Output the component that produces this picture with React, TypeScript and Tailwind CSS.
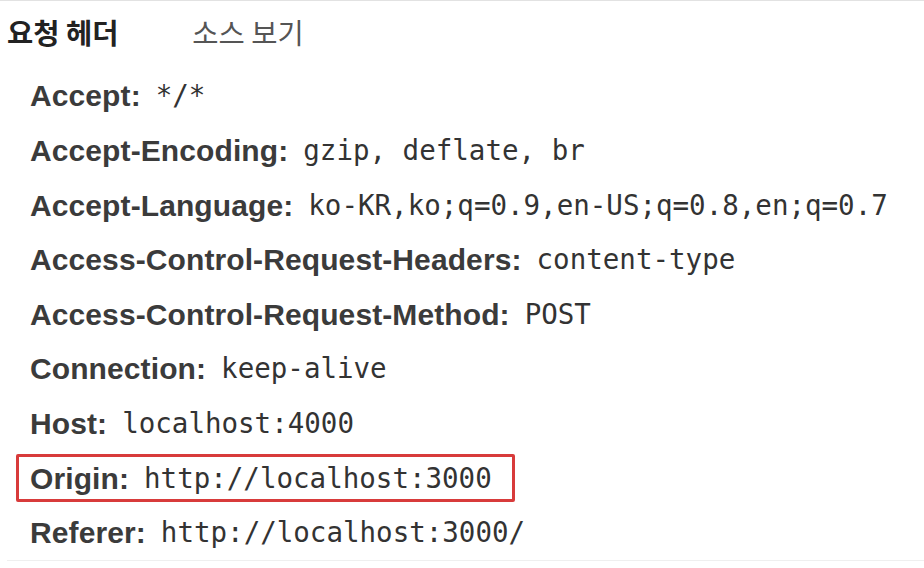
const headers: { name: string; value: string; highlight?: boolean }[] = [
  { name: "Accept", value: "*/*" },
  { name: "Accept-Encoding", value: "gzip, deflate, br" },
  { name: "Accept-Language", value: "ko-KR,ko;q=0.9,en-US;q=0.8,en;q=0.7" },
  { name: "Access-Control-Request-Headers", value: "content-type" },
  { name: "Access-Control-Request-Method", value: "POST" },
  { name: "Connection", value: "keep-alive" },
  { name: "Host", value: "localhost:4000" },
  { name: "Origin", value: "http://localhost:3000", highlight: true },
  { name: "Referer", value: "http://localhost:3000/" },
]

const sans = "font-['Liberation_Sans','Noto_Sans_CJK_KR',sans-serif]"
const mono = "font-['DejaVu_Sans_Mono','Liberation_Mono',monospace]"

function HeaderLine({ name, value }: { name: string; value: string }) {
  return (
    <div className="flex items-center whitespace-nowrap">
      <span className={`${sans} text-[30px] font-bold tracking-[0.1px] text-[#3b3b3b]`}>{name}:</span>
      <span className={`${mono} ml-[15px] text-[27.5px] text-[#333]`}>{value}</span>
    </div>
  )
}

export default function App() {
  return (
    <div className="w-[924px] h-[568px] bg-white overflow-hidden border-t border-[#e2e2e2]">
      <div className="flex h-[62px] items-center pl-[7px] font-['Noto_Sans_CJK_KR',sans-serif] text-[28.5px]">
        <span className="font-bold text-[#222]">요청 헤더</span>
        <span className="ml-[74px] text-[#555]">소스 보기</span>
      </div>

      <div className="pt-[5.7px] ml-[7px] border-b border-[#efefef]">
        {headers.map((h) =>
          h.highlight ? (
            <div key={h.name} className="flex h-[54.6px] items-center pl-[9px]">
              <div className="flex h-[48px] w-[499px] items-center rounded-[2px] border-[3px] border-[#d83b3b] pl-[11px]">
                <HeaderLine name={h.name} value={h.value} />
              </div>
            </div>
          ) : (
            <div key={h.name} className="flex h-[54.6px] items-center pl-[23px]">
              <HeaderLine name={h.name} value={h.value} />
            </div>
          )
        )}
      </div>
    </div>
  )
}
